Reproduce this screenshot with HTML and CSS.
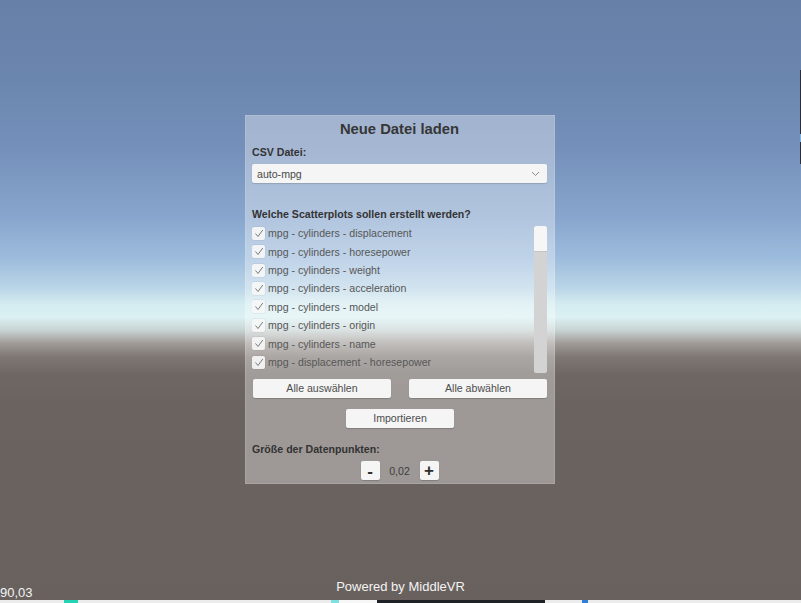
FILE: index.html
```html
<!DOCTYPE html>
<html lang="de">
<head>
<meta charset="utf-8">
<title>Neue Datei laden</title>
<link rel="stylesheet" href="styles.css">
</head>
<body>
<div class="scene">
  <div class="panel">
    <h1 class="title">Neue Datei laden</h1>
    <div class="label csv">CSV Datei:</div>
    <div class="select">
      <span>auto-mpg</span>
      <svg class="chev" width="9" height="6" viewBox="0 0 9 6"><path d="M1 1 L4.5 4.5 L8 1" fill="none" stroke="#8a8a8a" stroke-width="1"/></svg>
    </div>
    <div class="label question">Welche Scatterplots sollen erstellt werden?</div>
    <div class="listwrap">
      <ul class="list">
        <li><span class="cb"><svg width="10" height="9" viewBox="0 0 10 9"><path d="M1.5 4.5 L4 7.5 L8.8 1" fill="none" stroke="#7a7a7a" stroke-width="1"/></svg></span>mpg - cylinders - displacement</li>
        <li><span class="cb"><svg width="10" height="9" viewBox="0 0 10 9"><path d="M1.5 4.5 L4 7.5 L8.8 1" fill="none" stroke="#7a7a7a" stroke-width="1"/></svg></span>mpg - cylinders - horesepower</li>
        <li><span class="cb"><svg width="10" height="9" viewBox="0 0 10 9"><path d="M1.5 4.5 L4 7.5 L8.8 1" fill="none" stroke="#7a7a7a" stroke-width="1"/></svg></span>mpg - cylinders - weight</li>
        <li><span class="cb"><svg width="10" height="9" viewBox="0 0 10 9"><path d="M1.5 4.5 L4 7.5 L8.8 1" fill="none" stroke="#7a7a7a" stroke-width="1"/></svg></span>mpg - cylinders - acceleration</li>
        <li><span class="cb"><svg width="10" height="9" viewBox="0 0 10 9"><path d="M1.5 4.5 L4 7.5 L8.8 1" fill="none" stroke="#7a7a7a" stroke-width="1"/></svg></span>mpg - cylinders - model</li>
        <li><span class="cb"><svg width="10" height="9" viewBox="0 0 10 9"><path d="M1.5 4.5 L4 7.5 L8.8 1" fill="none" stroke="#7a7a7a" stroke-width="1"/></svg></span>mpg - cylinders - origin</li>
        <li><span class="cb"><svg width="10" height="9" viewBox="0 0 10 9"><path d="M1.5 4.5 L4 7.5 L8.8 1" fill="none" stroke="#7a7a7a" stroke-width="1"/></svg></span>mpg - cylinders - name</li>
        <li><span class="cb"><svg width="10" height="9" viewBox="0 0 10 9"><path d="M1.5 4.5 L4 7.5 L8.8 1" fill="none" stroke="#7a7a7a" stroke-width="1"/></svg></span>mpg - displacement - horesepower</li>
      </ul>
      <div class="scrollbar"><div class="thumb"></div></div>
    </div>
    <div class="btnrow">
      <button class="btn wide">Alle auswählen</button>
      <button class="btn wide">Alle abwählen</button>
    </div>
    <div class="importrow">
      <button class="btn import">Importieren</button>
    </div>
    <div class="label size">Größe der Datenpunkten:</div>
    <div class="stepper">
      <button class="btn step minus">-</button>
      <span class="value">0,02</span>
      <button class="btn step plus">+</button>
    </div>
  </div>
  <div class="fps">90,03</div>
  <div class="powered">Powered by MiddleVR</div>
  <div class="edge"><span class="e1"></span><span class="e2"></span><span class="e3"></span></div>
</div>
<div class="taskbar">
  <span class="seg light" style="width:64px"></span>
  <span class="seg teal" style="width:14px"></span>
  <span class="seg light" style="width:253px"></span>
  <span class="seg cyan" style="width:8px"></span>
  <span class="seg white" style="width:38px"></span>
  <span class="seg dark" style="width:168px"></span>
  <span class="seg light" style="width:37px"></span>
  <span class="seg blue" style="width:6px"></span>
  <span class="seg light" style="flex:1"></span>
</div>
</body>
</html>
```
FILE: styles.css
```css
html, body {
  margin: 0;
  padding: 0;
}
body {
  width: 801px;
  height: 603px;
  overflow: hidden;
  font-family: "Liberation Sans", Arial, sans-serif;
  background: #68615d;
}
.scene {
  position: relative;
  height: 600px;
  display: flex;
  justify-content: center;
  align-items: center;
  background: linear-gradient(to bottom,
    #6680a8 0px,
    #6b86ae 80px,
    #7591bb 150px,
    #87a5cc 215px,
    #9dbbdc 258px,
    #bad5e7 288px,
    #d4ebf0 304px,
    #dbf1f3 317px,
    #c8d4d4 330px,
    #a19c99 343px,
    #7e7773 357px,
    #6e6763 374px,
    #6a6360 405px,
    #68615d 600px);
}
.panel {
  width: 310px;
  height: 369px;
  margin: 0 1px 1px 0;
  box-sizing: border-box;
  padding: 5px 8px 0 7px;
  background: rgba(255, 255, 255, 0.35);
  box-shadow: inset 0 0 0 1px rgba(255, 255, 255, 0.12);
  display: flex;
  flex-direction: column;
}
.title {
  margin: 0;
  font-size: 14.8px;
  line-height: 18px;
  font-weight: bold;
  color: #363636;
  text-align: center;
}
.label {
  font-size: 10.6px;
  line-height: 14px;
  font-weight: bold;
  color: #333;
}
.csv { margin-top: 7px; }
.select {
  margin-top: 5px;
  height: 19px;
  background: #f5f5f5;
  border-radius: 2px;
  box-shadow: 0 1px 1px rgba(0,0,0,0.15);
  display: flex;
  align-items: center;
  justify-content: space-between;
  padding: 0 7px 0 5px;
  font-size: 10.6px;
  color: #4a4a4a;
}
.chev { display: block; }
.question { margin-top: 24px; }
.listwrap {
  margin-top: 3px;
  height: 149px;
  display: flex;
  overflow: hidden;
}
.list {
  list-style: none;
  margin: 0;
  padding: 0;
  flex: 1;
  overflow: hidden;
}
.list li {
  height: 18.43px;
  display: flex;
  align-items: center;
  font-size: 10.6px;
  color: #575757;
  white-space: nowrap;
}
.cb {
  width: 13px;
  height: 13px;
  margin: 0 3px 0 0;
  background: rgba(246, 246, 246, 0.92);
  border-radius: 2px;
  display: flex;
  align-items: center;
  justify-content: center;
  box-shadow: 0 0 0 0.5px rgba(0,0,0,0.08);
}
.cb svg { display: block; }
.scrollbar {
  width: 13px;
  margin-top: 2px;
  height: 147px;
  background: #d3d3d3;
  border-radius: 2px;
  overflow: hidden;
}
.thumb {
  height: 25px;
  background: #f6f6f6;
  border-bottom: 1px solid #c4c4c4;
  border-radius: 2px 2px 0 0;
}
.btn {
  font-family: "Liberation Sans", Arial, sans-serif;
  font-size: 10.6px;
  color: #4d4d4d;
  background: #f5f5f5;
  border: none;
  border-radius: 2px;
  box-shadow: 0 1px 1px rgba(0,0,0,0.18);
  padding: 0;
  height: 19px;
  line-height: 19px;
}
.btnrow {
  margin-top: 6px;
  display: flex;
  justify-content: space-between;
  padding-left: 1px;
}
.btn.wide { width: 138px; }
.importrow {
  margin-top: 11px;
  display: flex;
  justify-content: center;
  padding-left: 1px;
}
.btn.import { width: 108px; }
.size { margin-top: 14px; }
.stepper {
  margin-top: 5px;
  display: flex;
  justify-content: center;
  align-items: center;
  gap: 9px;
}
.btn.step {
  width: 19px;
  height: 19px;
  font-size: 17px;
  font-weight: bold;
  color: #2f2f2f;
  line-height: 19px;
}
.btn.minus { line-height: 21px; }
.value {
  font-size: 10.6px;
  color: #3e3e3e;
  width: 22px;
  text-align: center;
}
.fps {
  position: absolute;
  left: 0;
  bottom: -1px;
  font-size: 13px;
  line-height: 16px;
  color: #f4f4f4;
}
.powered {
  position: absolute;
  left: 0;
  right: 0;
  bottom: 5px;
  text-align: center;
  font-size: 13px;
  line-height: 16px;
  color: #f4f4f4;
}
.edge {
  position: absolute;
  right: 0;
  top: 70px;
  width: 1px;
  display: flex;
  flex-direction: column;
}
.edge span { display: block; width: 1px; }
.e1 { height: 64px; background: #2a2e38; }
.e2 { height: 8px; background: #7fb3e0; }
.e3 { height: 22px; background: #2a2e38; }
.taskbar {
  height: 3px;
  display: flex;
  background: #ececec;
}
.seg { display: block; height: 3px; }
.light { background: #ececec; }
.teal { background: #22d3b4; }
.cyan { background: #7fe0e0; }
.white { background: #f7f7f7; }
.dark { background: #1e2126; }
.blue { background: #2f7fd6; }
```
